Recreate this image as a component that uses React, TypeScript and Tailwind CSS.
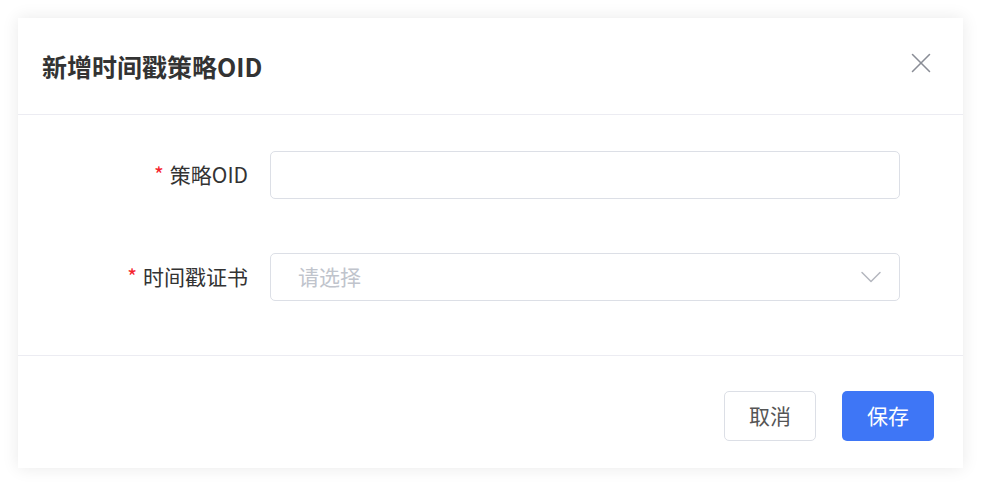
import { ChevronDown, X } from 'lucide-react';

const font = { fontFamily: '"Noto Sans CJK SC", "Noto Sans", sans-serif' };

function FormRow({ label, children }: { label: string; children: React.ReactNode }) {
  return (
    <div className="flex items-center">
      <label className="w-[252px] shrink-0 pr-[22px] text-right text-[21px] text-[#333]">
        <span className="mr-[6px] text-[#f5222d]">*</span>
        {label}
      </label>
      {children}
    </div>
  );
}

export default function App() {
  return (
    <div className="min-h-screen bg-white p-[18px]" style={font}>
      <div className="w-[945px] bg-white shadow-[0_0_16px_rgba(0,0,0,0.09)]">
        {/* Header */}
        <div className="flex h-[97px] items-center justify-between border-b border-[#ececf2] pl-[24px] pr-[25px] pt-[2px]">
          <h2 className="text-[25px] font-bold text-[#333]">新增时间戳策略OID</h2>
          <X size={34} strokeWidth={1.1} className="-mt-[8px] text-[#8a8d96]" />
        </div>

        {/* Body */}
        <div className="flex flex-col gap-[54px] border-b border-[#ececf2] pb-[54px] pt-[36px]">
          <FormRow label="策略OID">
            <input className="h-[48px] w-[630px] rounded-[5px] border border-[#dcdfe6] bg-white px-[27px] text-[21px] outline-none" />
          </FormRow>
          <FormRow label="时间戳证书">
            <div className="flex h-[48px] w-[630px] items-center justify-between rounded-[5px] border border-[#dcdfe6] bg-white pl-[27px] pr-[10px]">
              <span className="text-[21px] text-[#c0c4cc]">请选择</span>
              <ChevronDown size={36} strokeWidth={1} className="text-[#b4b7bf]" />
            </div>
          </FormRow>
        </div>

        {/* Footer */}
        <div className="flex h-[112px] items-center justify-end gap-[26px] pr-[29px] pt-[8px]">
          <button className="h-[50px] w-[92px] rounded-[5px] border border-[#dcdfe6] bg-white text-[21px] text-[#555]">
            取消
          </button>
          <button className="h-[50px] w-[92px] rounded-[5px] bg-[#3e76f6] text-[21px] text-white">
            保存
          </button>
        </div>
      </div>
    </div>
  );
}
